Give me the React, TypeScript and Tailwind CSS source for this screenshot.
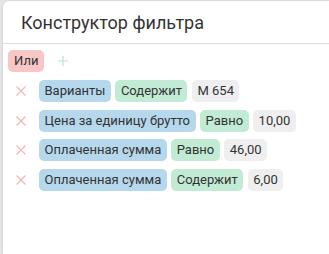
import React from "react";

type Row = { field: string; op: string; value: string };

const rows: Row[] = [
  { field: "Варианты", op: "Содержит", value: "M 654" },
  { field: "Цена за единицу брутто", op: "Равно", value: "10,00" },
  { field: "Оплаченная сумма", op: "Равно", value: "46,00" },
  { field: "Оплаченная сумма", op: "Содержит", value: "6,00" },
];

const Chip = ({ color, children }: { color: string; children: React.ReactNode }) => (
  <span className={`${color} h-[22px] px-[5.5px] rounded-[5px] flex items-center text-[13px] text-[#333] whitespace-nowrap`}>
    {children}
  </span>
);

const App = () => {
  return (
    <div
      className="w-[329px] h-[254px] bg-[#e6e6e6] overflow-hidden pl-[3px] pt-[1px]"
      style={{ fontFamily: "Roboto, 'Noto Sans', sans-serif" }}
    >
      <div className="bg-white h-full rounded-tl-[6px] shadow-[0_0_3px_rgba(0,0,0,0.15)]">
        {/* Header */}
        <div className="h-[43px] border-b border-[#dcdcdc] pl-[18px] flex items-center">
          <h1 className="text-[18px] text-[#333] pt-[1px]">Конструктор фильтра</h1>
        </div>

        {/* Group */}
        <div className="pl-[5px] pt-[6px] flex items-center gap-[14px]">
          <span className="bg-[#f8c6c6] h-[22px] px-[6px] rounded-[5px] flex items-center text-[13px] text-[#333]">Или</span>
          <svg width="10" height="10" viewBox="0 0 10 10" className="text-[#b3e5dd]">
            <path d="M5 0v10M0 5h10" stroke="currentColor" strokeWidth="1.2" />
          </svg>
        </div>

        {/* Conditions */}
        <div className="pt-[8px] flex flex-col gap-[7.5px]">
          {rows.map((r, i) => (
            <div key={i} className="flex items-center pl-[13px]">
              <svg width="10" height="10" viewBox="0 0 10 10" className="text-[#f6b4b4] mr-[13px]">
                <path d="M0.5 0.5l9 9M9.5 0.5l-9 9" stroke="currentColor" strokeWidth="1.2" />
              </svg>
              <div className="flex items-center gap-[4.5px]">
                <Chip color="bg-[#b6d8ec]">{r.field}</Chip>
                <Chip color="bg-[#c1ebd4]">{r.op}</Chip>
                <Chip color="bg-[#efefef]">{r.value}</Chip>
              </div>
            </div>
          ))}
        </div>
      </div>
    </div>
  );
};

export default App;
